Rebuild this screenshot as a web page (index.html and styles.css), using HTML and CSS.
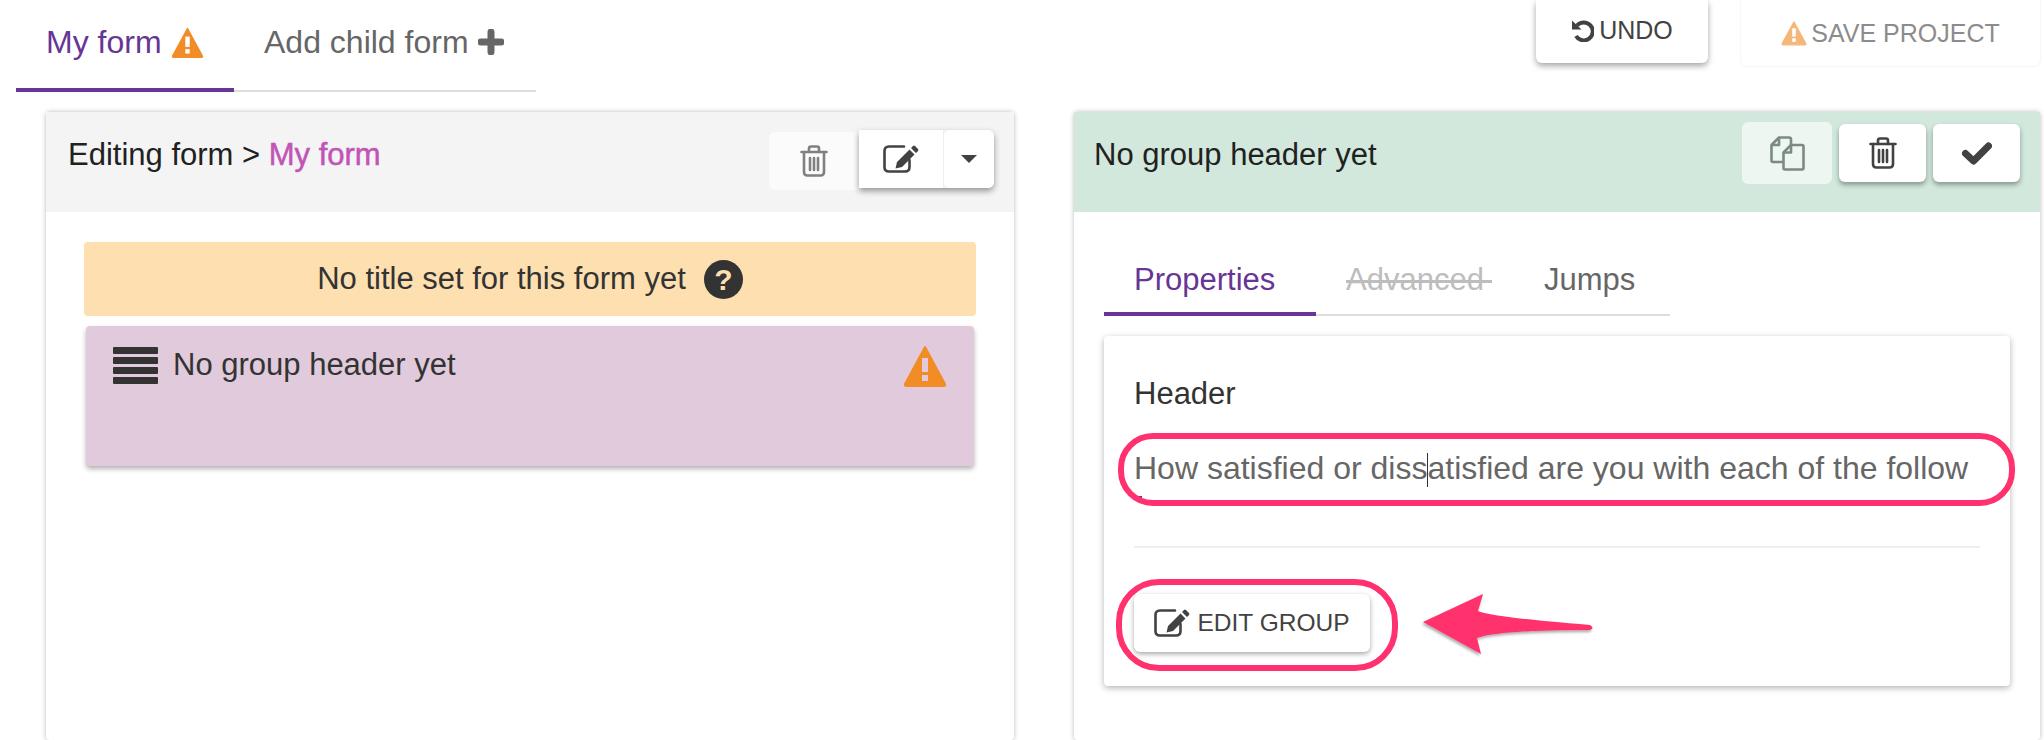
FILE: index.html
```html
<!DOCTYPE html>
<html lang="en">

<head>
    <meta charset="UTF-8">
    <title>Form builder</title>
    <link rel="stylesheet" href="styles.css">
</head>

<body>
    <!-- Shared icons -->
    <svg class="icon-defs" aria-hidden="true">
        <symbol id="i-warning" viewBox="0 0 44 42">
            <path d="M22 2 L42 39 Q43 41 40 41 H4 Q1 41 2 39 Z" fill="currentColor" stroke="currentColor" stroke-width="2" stroke-linejoin="round" />
            <rect x="19" y="13" width="6" height="14" fill="var(--mark)" />
            <rect x="19" y="30" width="6" height="6" fill="var(--mark)" />
        </symbol>
        <symbol id="i-trash" viewBox="0 0 28 32">
            <g fill="none" stroke="currentColor" stroke-width="2.6" stroke-linecap="round">
                <path d="M1.5 7 H26.5" />
                <path d="M9 7 V3.5 Q9 1.5 11 1.5 H17 Q19 1.5 19 3.5 V7" />
                <path d="M4 7 V27 Q4 30.5 7.5 30.5 H20.5 Q24 30.5 24 27 V7" />
                <path d="M10 13 V25 M14 13 V25 M18 13 V25" />
            </g>
        </symbol>
        <symbol id="i-edit" viewBox="0 0 36 28">
            <path d="M21 1.5 H6 Q1.5 1.5 1.5 6 V22 Q1.5 26.5 6 26.5 H22 Q26.5 26.5 26.5 22 V15" fill="none" stroke="currentColor" stroke-width="2.6" stroke-linecap="round" />
            <path d="M12.5 23.5 L14 17 L26.5 4.5 L31.5 9.5 L19 22 Z M28 3 L30 1 Q31 0.2 32 1 L35 4 Q35.8 5 35 6 L33 8 Z" fill="currentColor" />
        </symbol>
        <symbol id="i-copy" viewBox="0 0 35 35">
            <g fill="none" stroke="currentColor" stroke-width="2.6" stroke-linejoin="round">
                <path d="M13 26 H3 Q1.5 26 1.5 24.5 V9 L9 1.5 H19 Q21 1.5 21 3.5 V9" />
                <path d="M9 1.5 V9 H1.5" />
                <path d="M21 9 H32 Q33.5 9 33.5 10.5 V32 Q33.5 33.5 32 33.5 H15 Q13.5 33.5 13.5 32 V16.5 Z" />
                <path d="M21 9 V16.5 H13.5" />
            </g>
        </symbol>
    </svg>

    <!-- Top bar -->
    <div class="topbar">
        <div class="tabs form-tabs">
            <div class="tab active">My form
                <svg class="icon warn-sm"><use href="#i-warning" /></svg>
            </div>
            <div class="tab">Add child form
                <svg class="icon plus" viewBox="0 0 26 26"><path d="M13 3 V23 M3 13 H23" stroke="currentColor" stroke-width="7" stroke-linecap="round" /></svg>
            </div>
        </div>
        <div class="actions">
            <button class="btn undo-btn">
                <svg class="icon undo" viewBox="0 0 23 23"><path d="M6 6.5 A9 9 0 1 1 5 17" fill="none" stroke="currentColor" stroke-width="4" /><path d="M1 1.5 L10.5 10.5 H1 Z" fill="currentColor" /></svg>
                UNDO
            </button>
            <button class="btn save-btn">
                <svg class="icon warn-xs"><use href="#i-warning" /></svg>
                SAVE PROJECT
            </button>
        </div>
    </div>

    <div class="panels">
        <!-- Form panel -->
        <section class="panel form-panel">
            <div class="panel-header">
                <div class="panel-title">Editing form &gt; <span class="form-name">My form</span></div>
                <div class="split-tools">
                    <button class="tool faded trash-left"><svg class="icon trash"><use href="#i-trash" /></svg></button>
                    <div class="split-btn">
                        <button class="tool edit-tool"><svg class="icon edit"><use href="#i-edit" /></svg></button>
                        <button class="tool caret-tool"><span class="caret"></span></button>
                    </div>
                </div>
            </div>
            <div class="panel-body">
                <div class="title-banner">No title set for this form yet <span class="help">?</span></div>
                <div class="group-box">
                    <div class="group-label">
                        <span class="bars"><i></i><i></i><i></i><i></i></span>
                        No group header yet
                    </div>
                    <svg class="icon warn-lg"><use href="#i-warning" /></svg>
                </div>
            </div>
        </section>

        <!-- Input panel -->
        <section class="panel input-panel">
            <div class="panel-header green">
                <div class="panel-title">No group header yet</div>
                <div class="tools">
                    <button class="tool faded copy-tool"><svg class="icon copy"><use href="#i-copy" /></svg></button>
                    <button class="tool raised"><svg class="icon trash"><use href="#i-trash" /></svg></button>
                    <button class="tool raised">
                        <svg class="icon check" viewBox="0 0 30 23"><path d="M3.5 11.5 L11.5 19 L26.5 4" fill="none" stroke="currentColor" stroke-width="7" stroke-linejoin="round" stroke-linecap="round" /></svg>
                    </button>
                </div>
            </div>
            <div class="panel-body input-body">
                <div class="tabs input-tabs">
                    <div class="tab active">Properties</div>
                    <div class="tab struck"><span class="strike">Advanced</span></div>
                    <div class="tab">Jumps</div>
                </div>
                <div class="card">
                    <div class="field-label">Header</div>
                    <div class="field-value">How satisfied or diss<span class="cursor"></span>atisfied are you with each of the follow</div>
                    <div class="field-focus"></div>
                    <div class="field-line"></div>
                    <button class="btn edit-group"><svg class="icon edit"><use href="#i-edit" /></svg> EDIT GROUP</button>
                </div>
            </div>
        </section>
    </div>

    <!-- Annotation drawn over the screenshot -->
    <svg class="annotation" viewBox="0 0 2044 740" width="2044" height="740">
        <defs>
            <filter id="arrow-shadow" x="-10%" y="-10%" width="120%" height="130%">
                <feDropShadow dx="-1" dy="2" stdDeviation="1.5" flood-opacity="0.35" />
            </filter>
        </defs>
        <rect x="1121" y="436" width="891" height="67" rx="32" fill="none" stroke="#ff316e" stroke-width="6" />
        <rect x="1119" y="582" width="276" height="86" rx="40" fill="none" stroke="#ff316e" stroke-width="6" />
        <path d="M1423 622 L1483 594 L1478 611 Q1490 617 1590 625 Q1595 628 1590 630 Q1500 630 1477 638 L1481 654 Z" fill="#ff316e" filter="url(#arrow-shadow)" />
    </svg>
</body>

</html>
```

FILE: styles.css
```css
/* General Reset */
* {
    margin: 0;
    padding: 0;
    box-sizing: border-box;
}

html,
body {
    height: 740px;
    overflow: hidden;
}

body {
    position: relative;
    background: #fff;
    color: #212121;
    font-family: "Liberation Sans", Arial, sans-serif;
    font-size: 31px;
}

button {
    border: none;
    background: #fff;
    font-family: inherit;
    color: #424242;
}

.icon-defs {
    display: none;
}

.icon {
    display: inline-block;
    flex: none;
}

/* Top bar */
.topbar {
    display: flex;
    justify-content: space-between;
    align-items: flex-start;
    height: 112px;
    padding: 0 4px 0 16px;
}

.tabs {
    display: flex;
    border-bottom: 2px solid #ddd;
}

.tab {
    display: flex;
    align-items: center;
    gap: 9px;
    padding: 0 30px;
    margin-bottom: -2px;
    color: #666;
    border-bottom: 4px solid transparent;
}

.tab.active {
    color: #673594;
    border-bottom-color: #673594;
}

.form-tabs {
    width: 520px;
    height: 92px;
    font-size: 32px;
}

.form-tabs .tab {
    padding-bottom: 4px;
}

.form-tabs .active {
    width: 218px;
}

.warn-sm {
    width: 33px;
    height: 31px;
    color: #f28c26;
    --mark: #fff;
}

.plus {
    width: 26px;
    height: 26px;
}

.actions {
    display: flex;
    align-items: flex-start;
    gap: 33px;
}

.btn {
    display: flex;
    align-items: center;
    font-size: 25px;
    border-radius: 0 0 6px 6px;
}

.undo-btn {
    width: 172px;
    height: 63px;
    justify-content: center;
    gap: 5px;
    padding-bottom: 2px;
    box-shadow: 0 3px 6px rgba(0, 0, 0, 0.35);
}

.undo {
    width: 23px;
    height: 23px;
}

.save-btn {
    width: 299px;
    height: 66px;
    justify-content: center;
    gap: 4px;
    color: #8c8c8c;
    box-shadow: 0 0 2px rgba(0, 0, 0, 0.12);
}

.warn-xs {
    width: 26px;
    height: 26px;
    color: #f5b679;
    --mark: #fff;
}

/* Panels */
.panels {
    display: flex;
    gap: 60px;
    padding-left: 46px;
}

.panel {
    height: 628px;
    border-radius: 4px;
    box-shadow: 0 0 5px rgba(0, 0, 0, 0.28);
}

.form-panel {
    width: 968px;
}

.input-panel {
    width: 966px;
}

.panel-header {
    display: flex;
    justify-content: space-between;
    height: 100px;
    padding: 18px 20px 0 22px;
    background: #f4f4f4;
}

.panel-header.green {
    padding: 10px 20px 0 20px;
    background: #d2e8dc;
}

.panel-title {
    line-height: 50px;
}

.green .panel-title {
    padding-top: 8px;
}

.form-name {
    color: #c154b5;
    -webkit-text-stroke: 0.5px #c154b5;
}

.split-tools {
    display: flex;
    align-items: flex-start;
}

.tool {
    display: flex;
    align-items: center;
    justify-content: center;
    border-radius: 6px;
}

.faded {
    background: rgba(255, 255, 255, 0.6);
}

.trash-left {
    width: 90px;
    height: 58px;
    margin-top: 2px;
    border-radius: 6px 0 0 6px;
    color: #808080;
}

.split-btn {
    display: flex;
    border-radius: 0 6px 6px 0;
    box-shadow: 0 3px 6px rgba(0, 0, 0, 0.4);
}

.edit-tool {
    width: 85px;
    height: 58px;
    border-right: 1px solid #eee;
    border-radius: 0;
}

.caret-tool {
    width: 50px;
    height: 58px;
}

.caret {
    border-left: 8px solid transparent;
    border-right: 8px solid transparent;
    border-top: 8px solid #424242;
}

.trash {
    width: 28px;
    height: 32px;
}

.edit {
    width: 36px;
    height: 28px;
}

.tools {
    display: flex;
    align-items: flex-start;
    gap: 7px;
}

.copy-tool {
    width: 90px;
    height: 62px;
    color: #7b8b84;
}

.copy {
    width: 35px;
    height: 35px;
}

.raised {
    width: 87px;
    height: 58px;
    margin-top: 2px;
    box-shadow: 0 3px 5px rgba(0, 0, 0, 0.35);
}

.check {
    width: 30px;
    height: 23px;
}

/* Form panel body */
.panel-body {
    padding: 30px 38px;
}

.title-banner {
    display: flex;
    align-items: center;
    justify-content: center;
    gap: 18px;
    height: 74px;
    margin-bottom: 10px;
    border-radius: 4px;
    background: #fddfb0;
    color: #333;
}

.help {
    width: 39px;
    height: 39px;
    border-radius: 50%;
    background: #333;
    color: #fddfb0;
    font-size: 30px;
    font-weight: 700;
    line-height: 39px;
    text-align: center;
}

.group-box {
    display: flex;
    justify-content: space-between;
    align-items: flex-start;
    height: 140px;
    margin: 0 2px;
    padding: 19px 27px;
    border-radius: 4px;
    background: #e0cadb;
    color: #333;
    box-shadow: 0 3px 5px rgba(0, 0, 0, 0.3);
}

.group-label {
    display: flex;
    align-items: center;
    gap: 15px;
    height: 40px;
}

.bars {
    display: flex;
    flex-direction: column;
    justify-content: space-between;
    width: 45px;
    height: 37px;
}

.bars i {
    height: 7px;
    border-radius: 1px;
    background: #333;
}

.warn-lg {
    width: 44px;
    height: 42px;
    color: #f28c26;
    --mark: #e0cadb;
}

/* Input panel body */
.input-body {
    padding: 30px 30px;
}

.input-tabs {
    height: 74px;
    width: 566px;
}

.input-tabs .tab {
    align-items: flex-start;
    padding-top: 20px;
}

.input-tabs .active {
    width: 212px;
}

.tab.struck {
    color: #bdbdbd;
}

.strike {
    background: linear-gradient(#bdbdbd, #bdbdbd) no-repeat 0 55% / 100% 3px;
    padding-right: 8px;
    margin-right: -8px;
}

.card {
    display: flex;
    flex-direction: column;
    align-items: flex-start;
    height: 350px;
    margin-top: 20px;
    padding: 40px 30px 0;
    border-radius: 4px;
    box-shadow: 0 2px 6px rgba(0, 0, 0, 0.3);
}

.field-label {
    color: #333;
    line-height: 36px;
}

.field-value {
    align-self: stretch;
    overflow: hidden;
    margin-top: 37px;
    color: #666;
    font-size: 32px;
    line-height: 38px;
    white-space: nowrap;
}

.cursor {
    display: inline-block;
    width: 1px;
    height: 34px;
    margin-right: -1px;
    background: #333;
    vertical-align: -8px;
}

.field-focus {
    width: 8px;
    height: 3px;
    margin-top: 9px;
    background: #673594;
}

.field-line {
    align-self: stretch;
    height: 2px;
    margin-top: 47px;
    background: #eee;
}

.edit-group {
    gap: 7px;
    justify-content: center;
    width: 236px;
    height: 58px;
    margin-top: 46px;
    border-radius: 6px;
    font-size: 24.5px;
    color: #424242;
    box-shadow: 0 2px 5px rgba(0, 0, 0, 0.35);
}

/* Annotation overlay */
.annotation {
    position: absolute;
    top: 0;
    left: 0;
    pointer-events: none;
}
```
